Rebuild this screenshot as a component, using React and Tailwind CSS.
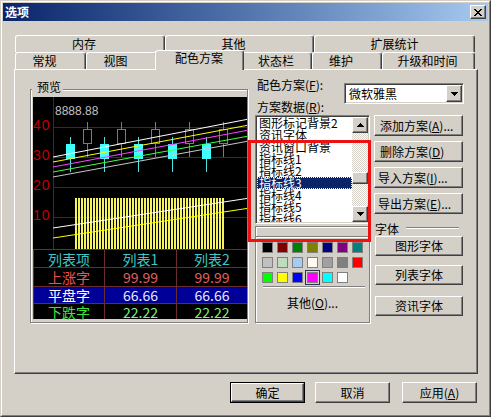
import React from "react";

const RAISED =
  "border border-t-white border-l-white border-r-[#404040] border-b-[#404040] shadow-[inset_-1px_-1px_0_#808080]";
const SUNKEN =
  "border border-t-[#808080] border-l-[#808080] border-r-white border-b-white shadow-[inset_1px_1px_0_#404040,inset_-1px_-1px_0_#d4d0c8] p-[1px]";
const TAB =
  "h-[17px] border-t border-l border-r border-t-white border-l-white border-r-[#404040] shadow-[inset_-1px_0_0_#808080] rounded-t-[3px] flex justify-center pt-[2px] bg-[#d4d0c8] shrink-0";

function U({ children }) {
  return <span className="underline underline-offset-[1px]">{children}</span>;
}

function Btn({ children, className = "" }) {
  return (
    <div className={`${RAISED} bg-[#d4d0c8] flex items-center shrink-0 ${className}`}>
      {children}
    </div>
  );
}

function Arrow({ down = true }) {
  return (
    <svg width="7" height="4" viewBox="0 0 7 4" className="block" shapeRendering="crispEdges">
      {down ? (
        <path d="M0 0h7v1h-1v1h-1v1h-1v1h-1v-1h-1v-1h-1v-1h-1z" fill="#000" />
      ) : (
        <path d="M3 0h1v1h1v1h1v1h1v1h-7v-1h1v-1h1v-1h1z" fill="#000" />
      )}
    </svg>
  );
}

function Chart() {
  const cyan = [37, 71, 105, 139, 173];
  const red = [54, 88, 122, 156, 190];
  return (
    <svg width="214" height="152" className="block" shapeRendering="crispEdges">
      <defs>
        <pattern id="hatch" x="42" width="3" height="4" patternUnits="userSpaceOnUse">
          <rect x="0" y="0" width="2" height="4" fill="#f4f460" />
        </pattern>
      </defs>
      <line x1="20.5" y1="0" x2="20.5" y2="152" stroke="#a00000" />
      {[30, 60, 90, 120].map((y) => (
        <line key={y} x1="20" y1={y + 0.5} x2="214" y2={y + 0.5} stroke="#a00000" />
      ))}
      {[
        ["40", 33],
        ["30", 63],
        ["20", 93],
        ["10", 123],
      ].map(([t, y]) => (
        <text
          key={t}
          x="0"
          y={y}
          fill="#c00000"
          fontSize="14"
          letterSpacing="1"
          fontFamily="'Liberation Sans', sans-serif"
        >
          {t}
        </text>
      ))}
      <text x="22" y="18" fill="#c0c0c0" fontSize="12" fontFamily="'Liberation Sans', sans-serif">
        8888.88
      </text>
      <rect x="42" y="101" width="149" height="51" fill="url(#hatch)" />
      <g shapeRendering="auto">
        <line x1="20" y1="131" x2="217" y2="101" stroke="#ffffff" />
        <line x1="20" y1="141" x2="217" y2="111" stroke="#ffff00" />
      </g>
      {cyan.map((c) => (
        <g key={c}>
          <line x1={c + 0.5} y1="40" x2={c + 0.5} y2="75" stroke="#50e0e0" />
          <rect x={c - 4} y="47" width="9" height="15" fill="#40ffff" />
        </g>
      ))}
      {red.map((c) => (
        <g key={c}>
          <line x1={c + 0.5} y1="25" x2={c + 0.5} y2="60" stroke="#e05050" />
          <rect x={c - 3.5} y="32.5" width="8" height="14" fill="#000" stroke="#e05050" />
        </g>
      ))}
      <g shapeRendering="auto">
        <line x1="20" y1="60" x2="216" y2="22" stroke="#ffffff" />
        <line x1="20" y1="65" x2="216" y2="28" stroke="#ffff00" />
        <line x1="20" y1="70" x2="216" y2="33" stroke="#ff40ff" />
        <line x1="20" y1="75" x2="216" y2="39" stroke="#40ff40" />
        <line x1="20" y1="80" x2="216" y2="44" stroke="#c8c8c8" />
      </g>
    </svg>
  );
}

function Table() {
  const rows = [
    { h: "h-[18px] border-b", bg: "", c: ["列表项", "列表1", "列表2"], col: ["text-[#3cc8c8]", "text-[#3cc8c8]", "text-[#3cc8c8]"] },
    { h: "h-[19px] border-b", bg: "", c: ["上涨字", "99.99", "99.99"], col: ["text-[#f05050]", "text-[#e06060]", "text-[#e06060]"] },
    { h: "h-[17px] border-b", bg: "bg-[#000099]", c: ["平盘字", "66.66", "66.66"], col: ["text-white", "text-[#e8e8ff]", "text-[#e8e8ff]"] },
    { h: "h-[15px]", bg: "", c: ["下跌字", "22.22", "22.22"], col: ["text-[#40e040]", "text-[#80f080]", "text-[#80f080]"] },
  ];
  return (
    <div className="flex flex-col border-t border-l border-[#6a2c2c] text-[14px] leading-[14px]">
      {rows.map((r, i) => (
        <div key={i} className={`flex border-[#6a2c2c] ${r.h}`}>
          <div className={`w-[71px] border-r border-[#6a2c2c] flex items-center justify-center ${r.bg} ${r.col[0]}`}>{r.c[0]}</div>
          <div className={`w-[72px] border-r border-[#6a2c2c] flex items-center justify-center ${r.bg} ${r.col[1]}`}>{r.c[1]}</div>
          <div className={`flex-1 flex items-center justify-center ${r.bg} ${r.col[2]}`}>{r.c[2]}</div>
        </div>
      ))}
    </div>
  );
}

const PAL = [
  ["#000000", "#800000", "#008000", "#808000", "#000080", "#800080", "#008080"],
  ["#c0c0c0", "#c0dcc0", "#a6caf0", "#fffbf0", "#a0a0a4", "#808080", "#ff0000"],
  ["#00ff00", "#ffff00", "#0000ff", "#ff00ff", "#00ffff", "#ffffff"],
];

const ITEMS = ["图形标记背景2", "资讯字体", "资讯窗口背景", "指标线1", "指标线2", "指标线3", "指标线4", "指标线5", "指标线6"];

export default function App() {
  return (
    <div className="w-[491px] h-[417px] bg-[#d4d0c8] overflow-hidden relative font-['Noto_Sans_CJK_SC',sans-serif] text-[12px] leading-[12px] text-black select-none">
      <div className="w-full h-full border border-t-[#d4d0c8] border-l-[#d4d0c8] border-r-[#404040] border-b-[#404040]">
        <div className="w-full h-full border border-t-white border-l-white border-r-[#808080] border-b-[#808080] p-[1px] flex flex-col">
          {/* title bar */}
          <div className="h-[18px] shrink-0 bg-linear-to-r from-[#0a246a] to-[#a6caf0] flex items-center pl-[2px] pr-[2px]">
            <span className="text-white font-bold text-[12px] leading-[12px]">选项</span>
            <div className="flex-1" />
            <div className={`${RAISED} bg-[#d4d0c8] w-[16px] h-[14px] flex items-center justify-center`}>
              <svg width="8" height="7" viewBox="0 0 8 7" shapeRendering="crispEdges" className="block">
                <path d="M0 0h2v1h1v1h2v-1h1v-1h2v1h-1v1h-1v1h-1v1h1v1h1v1h1v1h-2v-1h-1v-1h-2v1h-1v1h-2v-1h1v-1h1v-1h1v-1h-1v-1h-1v-1h-1z" fill="#000" />
              </svg>
            </div>
          </div>

          {/* body */}
          <div className="flex flex-col pl-[11px] mt-[14px]">
            {/* tabs */}
            <div className="flex flex-col ml-[1px]">
              <div className="flex h-[17px]">
                <div className={`${TAB} w-[150px] pr-[12px]`}>内存</div>
                <div className={`${TAB} w-[149px] pr-[12px]`}>其他</div>
                <div className={`${TAB} w-[161px]`}>扩展统计</div>
              </div>
              <div className="flex h-[17px] items-start">
                <div className={`${TAB} w-[71px] pr-[12px]`}>常规</div>
                <div className={`${TAB} w-[71px] pr-[12px]`}>视图</div>
                <div className="relative z-10 -mx-[2px] -mt-[2px] w-[89px] h-[20px] shrink-0 border-t border-l border-r border-t-white border-l-white border-r-[#404040] shadow-[inset_-1px_0_0_#808080] rounded-t-[3px] flex justify-center pt-[1px] bg-[#d4d0c8] pr-[1px]">
                  配色方案
                </div>
                <div className={`${TAB} w-[70px] pr-[2px]`}>状态栏</div>
                <div className={`${TAB} w-[70px] pr-[12px]`}>维护</div>
                <div className={`${TAB} w-[93px] pr-[2px]`}>升级和时间</div>
              </div>
            </div>

            {/* panel */}
            <div className={`${RAISED} w-[464px] h-[305px] flex items-start`}>
              {/* preview group */}
              <div className="relative ml-[15px] mt-[19px] w-[218px] h-[234px] border border-[#808080] shadow-[1px_1px_0_#fff,inset_1px_1px_0_#fff] pl-[2px] pt-[7px] shrink-0">
                <span className="absolute left-[1px] -top-[9px] bg-[#d4d0c8] pl-[5px] pr-[2px]">预览</span>
                <div className="w-[214px] h-[222px] bg-black flex flex-col">
                  <Chart />
                  <Table />
                </div>
              </div>

              {/* right side */}
              <div className="ml-[7px] mt-[9px] flex flex-col">
                <div className="flex items-start h-[25px]">
                  <span className="w-[89px] pl-[2px]">
                    配色方案(<U>F</U>):
                  </span>
                  <div className={`${SUNKEN} bg-white mt-[4px] w-[120px] h-[21px] flex items-center`}>
                    <span className="pl-[3px] flex-1">微软雅黑</span>
                    <Btn className="w-[16px] h-[17px] justify-center">
                      <Arrow />
                    </Btn>
                  </div>
                </div>
                <div className="-mt-[3px] pl-[2px] h-[12px]">
                  方案数据(<U>R</U>):
                </div>

                <div className="flex items-start mt-[2px]">
                  {/* list column */}
                  <div className="flex flex-col w-[115px]">
                    <div className={`${SUNKEN} bg-white w-[115px] h-[109px] flex`}>
                      <div className="flex-1 overflow-hidden flex flex-col">
                        {ITEMS.map((t) => (
                          <div
                            key={t}
                            className={
                              t === "指标线3"
                                ? "h-[12px] shrink-0 pl-[2px] bg-[#0a246a] text-white outline-1 outline-dotted outline-[#ffff80] -outline-offset-1"
                                : "h-[12px] shrink-0 pl-[2px]"
                            }
                          >
                            {t}
                          </div>
                        ))}
                      </div>
                      <div className="w-[16px] flex flex-col shrink-0">
                        <Btn className="w-[16px] h-[16px] justify-center">
                          <Arrow down={false} />
                        </Btn>
                        <div className="flex-1 bg-[repeating-conic-gradient(#d4d0c8_0_25%,#ffffff_0_50%)] [background-size:2px_2px] flex flex-col">
                          <Btn className="w-[16px] h-[12px] mt-[39px]" />
                        </div>
                        <Btn className="w-[16px] h-[16px] justify-center">
                          <Arrow />
                        </Btn>
                      </div>
                    </div>

                    {/* palette panel */}
                    <div className="mt-[2px] w-[115px] h-[97px] border border-[#808080] shadow-[inset_1px_1px_0_#fff,1px_1px_0_#fff] flex flex-col">
                      <div className="h-[10px] border-b border-[#808080] shadow-[0_1px_0_#fff] shrink-0" />
                      <div className="flex flex-col gap-[4px] ml-[6px] mt-[5px]">
                        {PAL.map((row, ri) => (
                          <div key={ri} className="flex gap-[4px]">
                            {row.map((c) => (
                              <div
                                key={c}
                                style={{ backgroundColor: c }}
                                className={
                                  c === "#ff00ff"
                                    ? "w-[11px] h-[11px] border border-[#808080] outline-1 outline-solid outline-[#303050] outline-offset-[1px]"
                                    : "w-[11px] h-[11px] border border-[#808080]"
                                }
                              />
                            ))}
                          </div>
                        ))}
                      </div>
                      <div className="ml-[7px] mt-[3px] w-[102px] h-[2px] border-t border-[#808080] border-b border-b-white" />
                      <div className="mt-[9px] flex justify-center">
                        其他(<U>O</U>)...
                      </div>
                    </div>
                  </div>

                  {/* buttons column */}
                  <div className="ml-[4px] flex flex-col w-[89px]">
                    <Btn className="w-[89px] h-[21px] pl-[5px]">
                      添加方案(<U>A</U>)...
                    </Btn>
                    <Btn className="w-[89px] h-[21px] pl-[5px] mt-[5px]">
                      删除方案(<U>D</U>)
                    </Btn>
                    <Btn className="w-[89px] h-[21px] pl-[3px] mt-[5px]">
                      导入方案(<U>I</U>)...
                    </Btn>
                    <Btn className="w-[89px] h-[21px] pl-[3px] mt-[5px]">
                      导出方案(<U>E</U>)...
                    </Btn>
                    <div className="flex items-start mt-[9px] h-[12px]">
                      <span className="pl-[1px]">字体</span>
                      <div className="ml-[7px] mt-[4px] w-[53px] h-[2px] border-t border-[#808080] border-b border-b-white" />
                    </div>
                    <Btn className="w-[88px] h-[20px] ml-[1px] mt-[1px] justify-center">图形字体</Btn>
                    <Btn className="w-[88px] h-[20px] ml-[1px] mt-[9px] justify-center">列表字体</Btn>
                    <Btn className="w-[88px] h-[20px] ml-[1px] mt-[11px] justify-center">资讯字体</Btn>
                  </div>
                </div>
              </div>
            </div>

            {/* bottom buttons */}
            <div className="flex mt-[8px] ml-[216px]">
              <div className="border border-black w-[75px] h-[21px] shrink-0 flex">
                <Btn className="flex-1 justify-center">确定</Btn>
              </div>
              <Btn className="w-[75px] h-[21px] ml-[10px] justify-center">取消</Btn>
              <Btn className="w-[75px] h-[21px] ml-[12px] justify-center">
                应用(<U>A</U>)
              </Btn>
            </div>
          </div>
        </div>
      </div>

      {/* red annotation overlay */}
      <div className="absolute left-[248px] top-[140px] w-[123px] h-[102px] border-[3px] border-[#ee1111] pointer-events-none" />
    </div>
  );
}
